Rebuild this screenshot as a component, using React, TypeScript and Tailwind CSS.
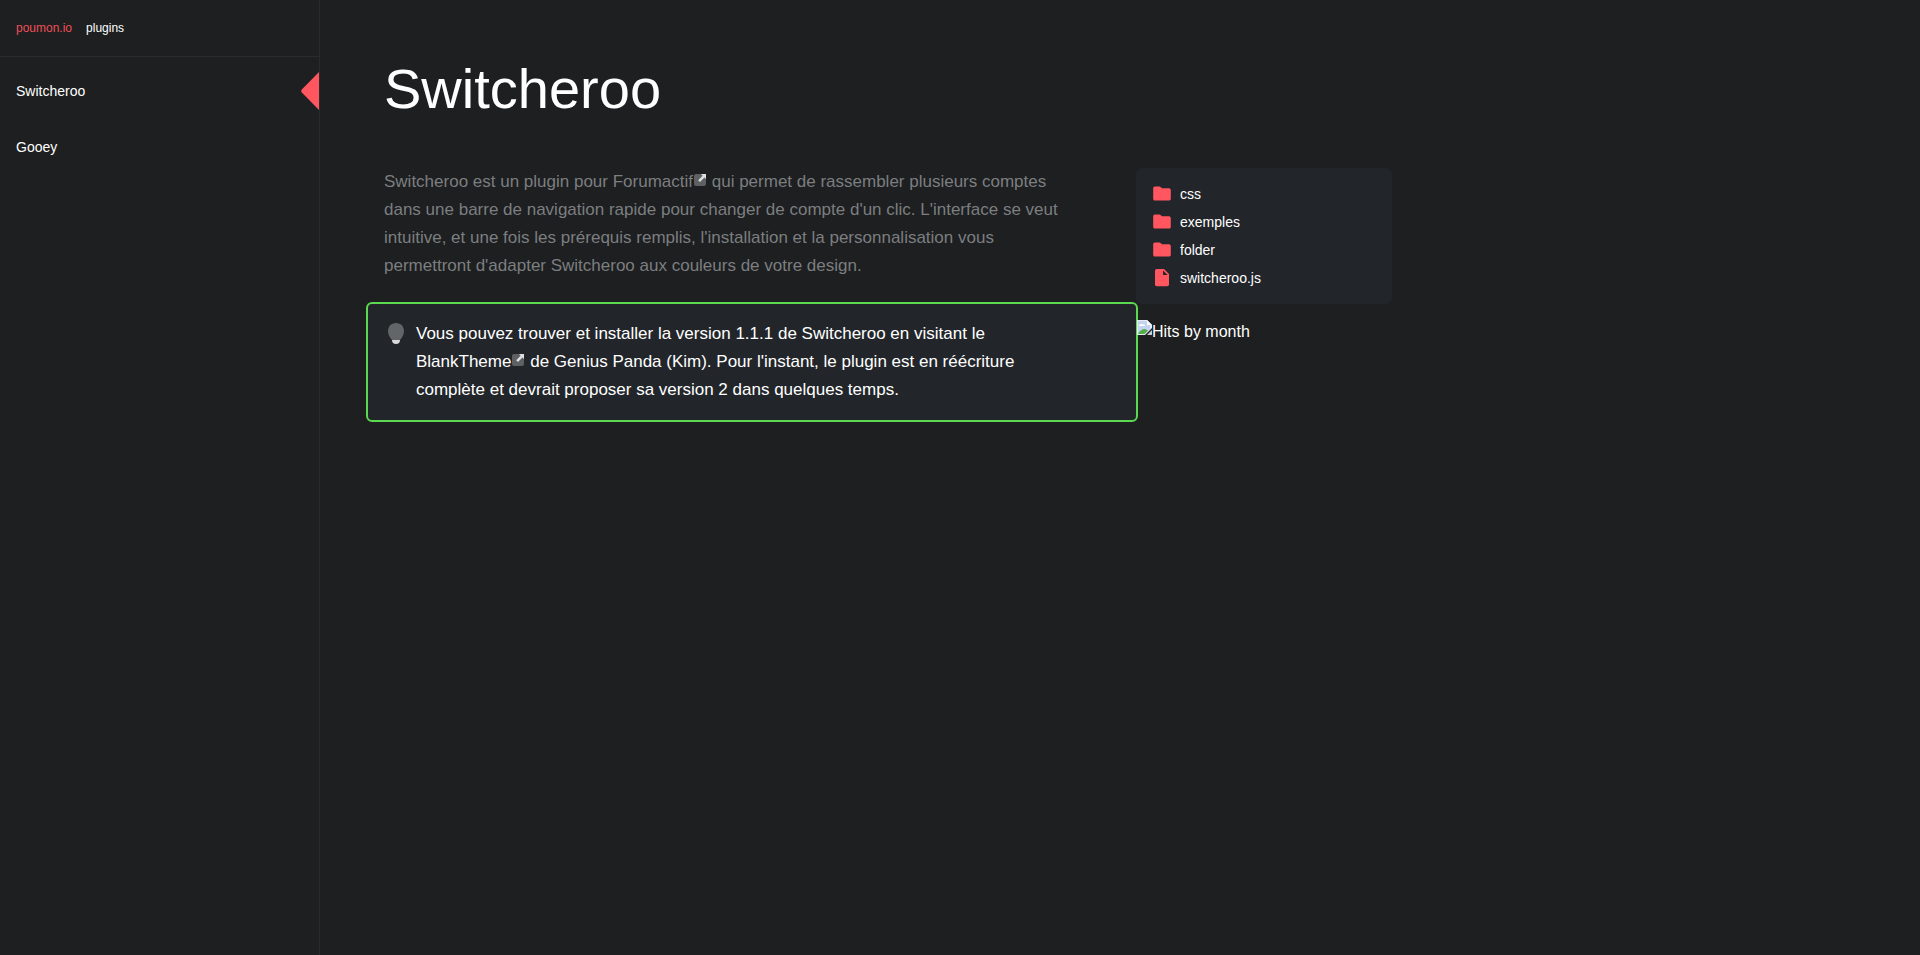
const plugins = [
  { name: "Switcheroo", active: true },
  { name: "Gooey", active: false },
];

const files = [
  { name: "css", folder: true },
  { name: "exemples", folder: true },
  { name: "folder", folder: true },
  { name: "switcheroo.js", folder: false },
];

function FolderIcon() {
  return (
    <svg viewBox="0 0 20 20" className="w-5 h-5 shrink-0" fill="#ff5660" aria-hidden="true">
      <path d="M1.2 4.2Q1.2 2.6 2.8 2.6H7.4Q8.2 2.6 8.8 3.2L10 4.3H17Q18.8 4.3 18.8 6V14.9Q18.8 16.6 17 16.6H3Q1.2 16.6 1.2 14.9Z" />
    </svg>
  );
}

function FileIcon() {
  return (
    <svg viewBox="0 0 20 20" className="w-5 h-5 shrink-0" aria-hidden="true">
      <path
        d="M4.8 1H12L17 6.1V16.3Q17 18.3 15 18.3H4.8Q3 18.3 3 16.3V2.8Q3 1 4.8 1Z"
        fill="#ff5660"
      />
      <path d="M11 2.4V7H15.6Z" fill="#22262a" />
    </svg>
  );
}

function BulbIcon() {
  return (
    <svg viewBox="0 0 24 28" className="w-6 h-7 shrink-0" aria-hidden="true">
      <path
        d="M12 3C7.4 3 4 6.6 4 11C4 14.4 5.6 17.6 8 20H16C18.4 17.6 20 14.4 20 11C20 6.6 16.6 3 12 3Z"
        fill="#636669"
      />
      <path d="M8 20H16C16 22.4 14.6 24 12 24C9.4 24 8 22.4 8 20Z" fill="#d8d9da" />
    </svg>
  );
}

function ExternalIcon() {
  return (
    <svg
      viewBox="0 0 14 14"
      className="inline-block w-[14px] h-[14px] align-baseline"
      aria-hidden="true"
    >
      <rect x="1" y="1" width="12" height="12" rx="2" fill="#5e6163" />
      <path d="M8 1H13V6L11.4 4.6L7 9L5.2 7.2L9.6 2.8Z" fill="#dedfe0" />
    </svg>
  );
}

function BrokenImageIcon() {
  return (
    <svg viewBox="0 0 16 16" className="w-4 h-4 shrink-0" aria-hidden="true">
      <path d="M1 0H11L16 5V8L9 15H1Z" fill="#e9edf5" />
      <path d="M2 1H10.5L14 5V9L9 14H2Z" fill="#c3d4f2" />
      <path d="M3 6C3 4 5 3.4 6 4.4C8 3.6 9 5 9 6Z" fill="#fff" />
      <path d="M2 14C3 11 6 9 9 9L12 10.5L8.5 14Z" fill="#55ad45" />
      <path d="M11 0V5H16Z" fill="#fff" />
      <path d="M16 10V15H11Z" fill="#c9cdd4" />
    </svg>
  );
}

export default function App() {
  return (
    <div className="flex min-h-screen bg-[#1d1f20] font-['Liberation_Sans',Arial,sans-serif] text-white">
      <aside className="w-80 shrink-0 border-r border-[#292b2d]">
        <header className="flex h-[57px] items-center gap-3.5 border-b border-[#292b2d] px-4 text-xs">
          <a href="#" className="text-[#ee4f58]">
            poumon.io
          </a>
          <a href="#" className="font-medium">
            plugins
          </a>
        </header>

        <nav className="pt-1.5">
          {plugins.map((plugin) => (
            <a
              key={plugin.name}
              href="#"
              className="flex h-14 items-center justify-between pl-4 text-sm font-medium"
            >
              {plugin.name}
              {plugin.active && (
                <svg viewBox="0 0 18 38" className="w-[18px] h-[38px]" fill="#ff5660" aria-hidden="true">
                  <path d="M18 0V38L0.8 20.6Q-0.4 19 0.8 17.4Z" />
                </svg>
              )}
            </a>
          ))}
        </nav>
      </aside>

      <main className="flex-1 px-16 pt-14">
        <h1 className="mb-[46px] text-[56px] leading-[66px]">Switcheroo</h1>

        <div className="flex items-start">
          <article className="w-full max-w-[752px] text-[17px] leading-7">
            <p className="mb-[22px] pr-16 text-[#7c7e80]">
              Switcheroo est un plugin pour{" "}
              <a href="#">
                Forumactif
                <ExternalIcon />
              </a>{" "}
              qui permet de rassembler plusieurs comptes dans une barre de navigation rapide pour
              changer de compte d'un clic. L'interface se veut intuitive, et une fois les prérequis
              remplis, l'installation et la personnalisation vous permettront d'adapter Switcheroo
              aux couleurs de votre design.
            </p>

            <div className="-ml-[18px] -mr-0.5 flex gap-2 rounded-md border-2 border-[#5bd950] bg-[#22262a] p-4">
              <BulbIcon />
              <p className="pr-16">
                Vous pouvez trouver et installer la version 1.1.1 de Switcheroo en visitant le{" "}
                <a href="#">
                  BlankTheme
                  <ExternalIcon />
                </a>{" "}
                de Genius Panda (Kim). Pour l'instant, le plugin est en réécriture complète et
                devrait proposer sa version 2 dans quelques temps.
              </p>
            </div>
          </article>

          <aside className="w-64 shrink-0">
            <ul className="rounded-md bg-[#22262a] px-4 py-3 text-sm">
              {files.map((file) => (
                <li key={file.name}>
                  <a href="#" className="flex h-7 items-center gap-2">
                    {file.folder ? <FolderIcon /> : <FileIcon />}
                    {file.name}
                  </a>
                </li>
              ))}
            </ul>
            <div className="mt-4 flex items-start text-base leading-6">
              <BrokenImageIcon />
              Hits by month
            </div>
          </aside>
        </div>
      </main>
    </div>
  );
}
